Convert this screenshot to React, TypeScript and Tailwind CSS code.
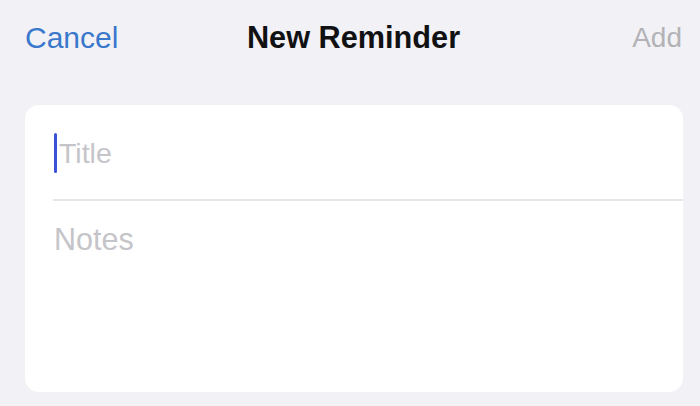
import React from "react"

export default function App() {
  return (
    <div className="h-[406px] w-[700px] overflow-hidden bg-[#f2f2f6] font-['Liberation_Sans',Arial,sans-serif]">
      {/* Navigation bar */}
      <div className="grid h-[76px] grid-cols-[1fr_auto_1fr] items-center pl-[25px] pr-[18px]">
        <button className="justify-self-start text-[30px] leading-[36px] text-[#3a78cc]">Cancel</button>
        <h1 className="text-[30.7px] font-bold leading-[36px] text-[#111114]">New Reminder</h1>
        <button className="justify-self-end text-[28px] leading-[36px] text-[#b3b3b7]">Add</button>
      </div>

      {/* Form card */}
      <div className="ml-[25px] mr-[17px] mt-[29px] h-[287px] rounded-[14px] bg-white">
        <div className="flex h-[94px] items-center pl-[29px] pt-[2px]">
          <span className="h-[40px] w-[3px] rounded-full bg-[#3a52d6]" />
          <span className="ml-[2px] text-[28.5px] leading-[36px] text-[#c5c5c9]">Title</span>
        </div>
        <div className="ml-[28px] h-[2px] bg-[#e6e6ea]" />
        <div className="pl-[29px] pt-[20px]">
          <span className="text-[30.5px] leading-[36px] text-[#c5c5c9]">Notes</span>
        </div>
      </div>
    </div>
  )
}
